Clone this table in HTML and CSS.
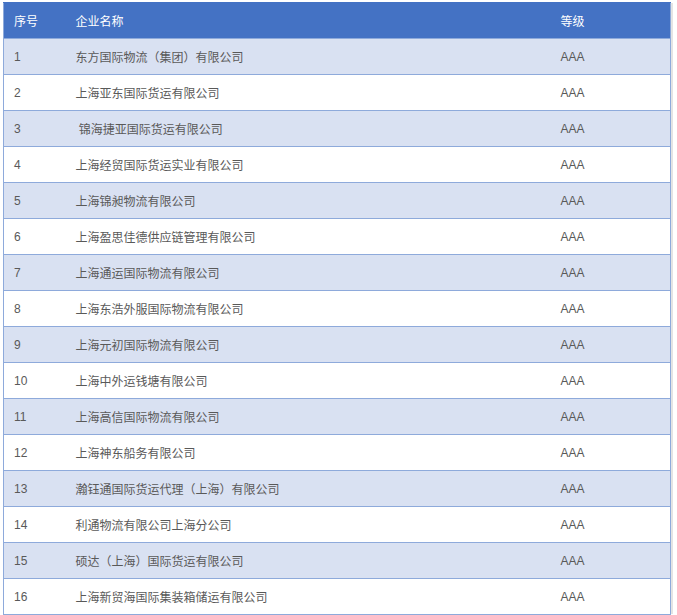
FILE: index.html
```html
<!DOCTYPE html>
<html lang="zh">
<head>
<meta charset="utf-8">
<link rel="stylesheet" href="styles.css">
</head>
<body>
<div class="wrap">
<table class="grid">
  <colgroup><col class="c1"><col class="c2"><col class="c3"></colgroup>
  <thead>
    <tr><th>序号</th><th>企业名称</th><th>等级</th></tr>
  </thead>
  <tbody>
    <tr class="alt"><td>1</td><td>东方国际物流（集团）有限公司</td><td>AAA</td></tr>
    <tr><td>2</td><td>上海亚东国际货运有限公司</td><td>AAA</td></tr>
    <tr class="alt"><td>3</td><td>&nbsp;锦海捷亚国际货运有限公司</td><td>AAA</td></tr>
    <tr><td>4</td><td>上海经贸国际货运实业有限公司</td><td>AAA</td></tr>
    <tr class="alt"><td>5</td><td>上海锦昶物流有限公司</td><td>AAA</td></tr>
    <tr><td>6</td><td>上海盈思佳德供应链管理有限公司</td><td>AAA</td></tr>
    <tr class="alt"><td>7</td><td>上海通运国际物流有限公司</td><td>AAA</td></tr>
    <tr><td>8</td><td>上海东浩外服国际物流有限公司</td><td>AAA</td></tr>
    <tr class="alt"><td>9</td><td>上海元初国际物流有限公司</td><td>AAA</td></tr>
    <tr><td>10</td><td>上海中外运钱塘有限公司</td><td>AAA</td></tr>
    <tr class="alt"><td>11</td><td>上海高信国际物流有限公司</td><td>AAA</td></tr>
    <tr><td>12</td><td>上海神东船务有限公司</td><td>AAA</td></tr>
    <tr class="alt"><td>13</td><td>瀚钰通国际货运代理（上海）有限公司</td><td>AAA</td></tr>
    <tr><td>14</td><td>利通物流有限公司上海分公司</td><td>AAA</td></tr>
    <tr class="alt"><td>15</td><td>硕达（上海）国际货运有限公司</td><td>AAA</td></tr>
    <tr><td>16</td><td>上海新贸海国际集装箱储运有限公司</td><td>AAA</td></tr>
  </tbody>
</table>
</div>
</body>
</html>
```

FILE: styles.css
```css
html, body {
  margin: 0;
  padding: 0;
  background: #ffffff;
}
.wrap {
  padding: 2px 0 0 3px;
}
.grid {
  width: 668px;
  border-collapse: collapse;
  table-layout: fixed;
  font-family: "Liberation Sans", "Noto Sans CJK SC", sans-serif;
  font-size: 12px;
  color: #595959;
  border-left: 1px solid #8eaadb;
  border-right: 1px solid #8eaadb;
  box-shadow: 3px 0 0 -1px #e4e4e4;
}
.c1 { width: 62px; }
.c2 { width: 485px; }
.c3 { width: auto; }
.grid th {
  background: #4472c4;
  color: #ffffff;
  font-weight: normal;
  text-align: left;
  height: 35px;
  padding: 0 0 0 10px;
  border-bottom: 1px solid #8eaadb;
  border-top: 1px solid #4472c4;
}
.grid td {
  height: 35px;
  padding: 0 0 0 10px;
  border-bottom: 1px solid #8eaadb;
  vertical-align: middle;
}
.grid tr.alt td {
  background: #d9e1f2;
}
```
